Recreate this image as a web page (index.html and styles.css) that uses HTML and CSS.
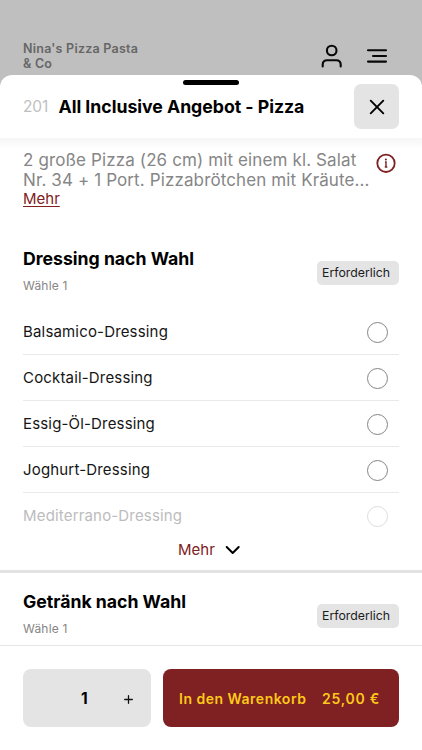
FILE: index.html
```html
<!DOCTYPE html>
<html lang="de">
<head>
<meta charset="utf-8">
<title>All Inclusive Angebot - Pizza</title>
<link rel="stylesheet" href="styles.css">
</head>
<body>
<div class="app">
  <header class="topbar">
    <div class="brand">Nina's Pizza Pasta<br>&amp; Co</div>
    <svg class="user-icon" width="24" height="26" viewBox="0 0 24 26" fill="none" stroke="#080808" stroke-width="2.1" stroke-linecap="round"><circle cx="11.700" cy="7.500" r="4.800"/><path d="M2.700 23.400v-1.700c0-2.700 1.800-4.500 4.500-4.500h9c2.700 0 4.500 1.800 4.500 4.500v1.700"/></svg>
    <svg class="menu-icon" width="22" height="16" viewBox="0 0 22 16" stroke="#080808" stroke-width="2.100" stroke-linecap="round"><path d="M2 2.300h18M7 8h13M2 13.600h18"/></svg>
  </header>
  <main class="sheet">
    <div class="sheet-head">
      <span class="handle"></span>
      <span class="number">201</span>
      <h1 class="title">All Inclusive Angebot - Pizza</h1>
      <button class="close"><svg width="16" height="16" viewBox="0 0 16 16" stroke="#000" stroke-width="1.900" stroke-linecap="round"><path d="M1.700 1.700l12.600 12.600M14.300 1.700L1.700 14.300"/></svg></button>
    </div>
    <div class="body">
      <section class="desc">
        <div><p class="desc-text">2 große Pizza (26 cm) mit einem kl. Salat<br>Nr. 34 + 1 Port. Pizzabrötchen mit Kräute...</p><a class="more-link">Mehr</a></div>
        <svg class="info" width="20" height="20" viewBox="0 0 20 20" fill="none" stroke="#7f2022" stroke-width="1.800"><circle cx="10" cy="10.300" r="8.700"/><path d="M9 9h1v5M8.800 14h2.500" stroke-width="1.400"/><circle cx="9.900" cy="6.400" r="1" fill="#7f2022" stroke="none"/></svg>
      </section>
      <section class="group">
        <div class="group-head">
          <div><h2>Dressing nach Wahl</h2><p>Wähle 1</p></div>
          <span class="badge">Erforderlich</span>
        </div>
        <ul class="options">
          <li><span>Balsamico-Dressing</span><i></i></li>
          <li><span>Cocktail-Dressing</span><i></i></li>
          <li><span>Essig-Öl-Dressing</span><i></i></li>
          <li><span>Joghurt-Dressing</span><i></i></li>
          <li class="faded"><span>Mediterrano-Dressing</span><i></i></li>
        </ul>
        <div class="expand"><span>Mehr</span><svg width="16" height="10" viewBox="0 0 16 10" fill="none" stroke="#000" stroke-width="2" stroke-linecap="round" stroke-linejoin="round"><path d="M1.700 2L7.700 8l6-6"/></svg></div>
      </section>
      <section class="group second">
        <div class="group-head">
          <div><h2>Getränk nach Wahl</h2><p>Wähle 1</p></div>
          <span class="badge">Erforderlich</span>
        </div>
      </section>
    </div>
    <footer class="footer">
      <div class="stepper"><b>1</b><svg width="9" height="9" viewBox="0 0 9 9" stroke="#111" stroke-width="1.300" stroke-linecap="round"><path d="M.7 4.500h7.600M4.500.7v7.600"/></svg></div>
      <button class="cart"><span>In den Warenkorb</span><span class="price">25,00 €</span></button>
    </footer>
  </main>
</div>
</body>
</html>
```
FILE: styles.css
```css
* { box-sizing: border-box; }
body, h1, h2, p, ul { margin: 0; padding: 0; }
body { background: #bfbfbf; font-family: Inter, "Liberation Sans", sans-serif; color: #000; overflow: hidden; }
button { border: 0; padding: 0; font-family: inherit; }
span, h1, h2, p, a { white-space: nowrap; }
svg { display: block; flex: none; }
.app { width: 422px; height: 750px; display: flex; flex-direction: column; }
.topbar { height: 75px; flex: none; display: flex; padding: 41px 34px 0 23px; }
.brand { flex: 1; font-size: 12.500px; line-height: 15px; font-weight: 600; color: #666; letter-spacing: .24px; }
.user-icon { margin-top: 2px; }
.menu-icon { margin: 7px 0 0 22px; }
.sheet { flex: 1; min-height: 0; background: #fff; border-radius: 12px 12px 0 0; display: flex; flex-direction: column; }
.sheet-head { position: relative; flex: none; height: 63px; padding: 0 23px; display: flex; align-items: center; }
.handle { position: absolute; left: 183px; top: 4.500px; width: 56px; height: 5.500px; border-radius: 3px; background: #000; }
.number { width: 35.500px; font-size: 15.500px; color: #bfbfbf; font-weight: 400; letter-spacing: -.1px; }
.title { flex: 1; font-size: 17.700px; line-height: 24px; font-weight: 700; letter-spacing: -.03px; }
.close { width: 45px; height: 45px; border-radius: 7px; background: #e4e4e4; display: flex; align-items: center; justify-content: center; }
.body { flex: 1; min-height: 0; overflow: hidden; background: linear-gradient(#f6f6f6, #fff 11px); }
.desc { display: flex; justify-content: space-between; padding: 12px 26px 0 23px; height: 107px; }
.desc-text { font-size: 17px; line-height: 20px; color: #868686; letter-spacing: .12px; }
.more-link { display: block; font-size: 15px; line-height: 18px; color: #7f2022; text-decoration: underline; text-underline-offset: 2px; }
.info { margin-left: -10px; margin-top: 3px; }
.group-head { display: flex; justify-content: space-between; padding: 0 23px; }
h2 { padding-top: 1px; font-size: 17.700px; line-height: 26px; font-weight: 700; letter-spacing: -.02px; }
.group-head p { font-size: 12px; line-height: 16px; margin-top: 6px; color: #858585; letter-spacing: .2px; }
.badge { width: 82px; height: 24px; margin-top: 16px; padding-left: 5px; border-radius: 5px; background: #e4e4e4; color: #1c1c1c; font-size: 12.300px; line-height: 24px; }
.options { list-style: none; padding: 15px 23px 0; }
.options li { height: 46px; padding-right: 11px; display: flex; align-items: center; justify-content: space-between; border-bottom: 1.500px solid #e9e9e9; font-size: 15px; color: #151515; letter-spacing: .17px; }
.options i { width: 21px; height: 21px; border: 1.300px solid #858585; border-radius: 50%; position: relative; top: .5px; }
.options .faded { border-color: transparent; color: #bcbcbc; }
.faded i { border-color: #ddd; }
.expand { height: 31px; display: flex; padding: 1px 0 0 178px; font-size: 15px; line-height: 20px; color: #7f2022; }
.expand svg { margin: 5px 0 0 10px; }
.second { border-top: 3px solid #e3e3e3; padding-top: 15px; }
.footer { flex: none; height: 105px; border-top: 1px solid #e4e4e4; padding: 23px 23px 0; display: flex; gap: 12px; }
.stepper { width: 128px; height: 58px; border-radius: 8px; background: #e4e4e4; display: flex; align-items: center; padding: 0 18px 0 58px; justify-content: space-between; font-size: 15.500px; }
.stepper b { font-weight: 700; }
.stepper svg { margin-top: 2px; }
.cart { flex: 1; height: 58px; border-radius: 8px; background: #7f2022; color: #fdc91a; font-size: 14px; font-weight: 600; letter-spacing: .5px; display: flex; justify-content: space-between; align-items: center; padding: 0 19px 0 16px; }
.price { letter-spacing: .75px; }
```
